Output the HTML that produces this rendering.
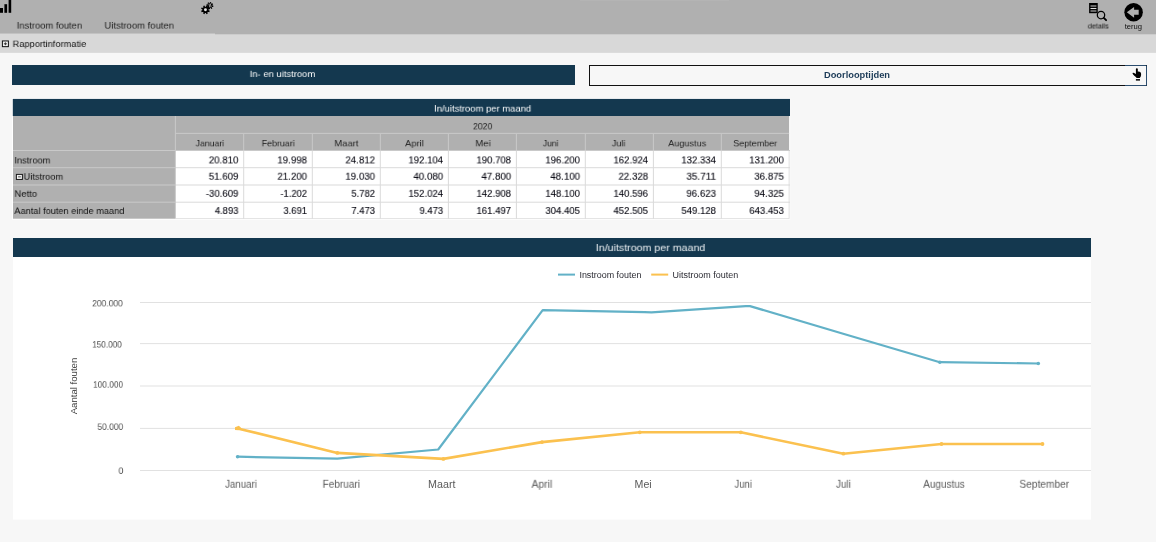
<!DOCTYPE html>
<html><head><meta charset="utf-8"><title>In- en uitstroom</title>
<style>
html,body{margin:0;padding:0;}
body{width:1156px;height:542px;overflow:hidden;position:relative;background:#f7f7f7;font-family:"Liberation Sans",sans-serif;}
body>div,body>svg{position:absolute;}
.t{white-space:nowrap;transform-origin:0 0;will-change:transform;}
</style></head><body>
<svg style="left:0;top:0" width="1156" height="542" viewBox="0 0 1156 542">
<rect x="0" y="33" width="1156" height="19.85" fill="#d8d8d8"/>
<rect x="0" y="0" width="215.1" height="33.55" fill="#b0b0b0"/>
<rect x="215" y="0" width="941" height="34.3" fill="#b0b0b0"/>
<rect x="580" y="0" width="149" height="0.9" fill="#b5b5b5"/>
<rect x="0" y="8" width="3" height="4.8" fill="#000"/>
<rect x="4.4" y="4.2" width="2.7" height="8.6" fill="#000"/>
<rect x="8.6" y="0" width="2.6" height="12.8" fill="#000"/>
<rect x="12" y="65" width="563" height="20" fill="#14384f"/>
<rect x="12" y="98" width="778.2" height="121.7" fill="#fff"/>
<rect x="12.8" y="98.9" width="777.2" height="17.1" fill="#14384f"/>
<rect x="13" y="116" width="776.1" height="34.5" fill="#b0b0b0"/>
<rect x="13" y="150.5" width="162.4" height="68.2" fill="#b0b0b0"/>
<rect x="175.4" y="150.5" width="613.8" height="68.2" fill="#fff"/>
<rect x="174.9" y="116" width="1" height="34.5" fill="#c9c9c9"/>
<rect x="175.4" y="132.9" width="613.7" height="1" fill="#c9c9c9"/>
<rect x="243.2" y="133.9" width="1" height="16.6" fill="#c9c9c9"/>
<rect x="311.8" y="133.9" width="1" height="16.6" fill="#c9c9c9"/>
<rect x="379.8" y="133.9" width="1" height="16.6" fill="#c9c9c9"/>
<rect x="447.9" y="133.9" width="1" height="16.6" fill="#c9c9c9"/>
<rect x="515.9" y="133.9" width="1" height="16.6" fill="#c9c9c9"/>
<rect x="584.8" y="133.9" width="1" height="16.6" fill="#c9c9c9"/>
<rect x="652.9" y="133.9" width="1" height="16.6" fill="#c9c9c9"/>
<rect x="720.8" y="133.9" width="1" height="16.6" fill="#c9c9c9"/>
<rect x="13" y="150" width="777" height="1" fill="#c9c9c9"/>
<rect x="13" y="167.2" width="162.4" height="1" fill="#c9c9c9"/>
<rect x="175.4" y="167.2" width="614.6" height="1" fill="#dadada"/>
<rect x="13" y="184.5" width="162.4" height="1" fill="#c9c9c9"/>
<rect x="175.4" y="184.5" width="614.6" height="1" fill="#dadada"/>
<rect x="13" y="201.7" width="162.4" height="1" fill="#c9c9c9"/>
<rect x="175.4" y="201.7" width="614.6" height="1" fill="#dadada"/>
<rect x="174.9" y="150.5" width="1" height="68.2" fill="#c9c9c9"/>
<rect x="243.2" y="150.5" width="1" height="68.2" fill="#dadada"/>
<rect x="311.8" y="150.5" width="1" height="68.2" fill="#dadada"/>
<rect x="379.8" y="150.5" width="1" height="68.2" fill="#dadada"/>
<rect x="447.9" y="150.5" width="1" height="68.2" fill="#dadada"/>
<rect x="515.9" y="150.5" width="1" height="68.2" fill="#dadada"/>
<rect x="584.8" y="150.5" width="1" height="68.2" fill="#dadada"/>
<rect x="652.9" y="150.5" width="1" height="68.2" fill="#dadada"/>
<rect x="720.8" y="150.5" width="1" height="68.2" fill="#dadada"/>
<rect x="788.7" y="150.5" width="0.8" height="68.2" fill="#d8d8d8"/>
<rect x="175.4" y="218.1" width="613.8" height="0.7" fill="#d8d8d8"/>
<rect x="13" y="238" width="1078" height="19" fill="#14384f"/>
<rect x="13" y="257" width="1078" height="262.6" fill="#fff"/>
<rect x="558" y="273.6" width="17" height="2" fill="#62b1c7"/>
<rect x="651.2" y="273.6" width="17" height="2" fill="#fbc14f"/>
<rect x="140" y="302.0" width="951" height="1" fill="#e1e1e1"/>
<rect x="140" y="343.1" width="951" height="1" fill="#e1e1e1"/>
<rect x="140" y="385.5" width="951" height="1" fill="#e1e1e1"/>
<rect x="140" y="427.9" width="951" height="1" fill="#e1e1e1"/>
<rect x="140" y="470.0" width="951" height="1" fill="#e1e1e1"/>
</svg>
<div class="t" style="left:16px;top:22px;font-size:10px;line-height:10px;color:#222;transform:translate(0.70px,0.00px) scale(0.9412,0.8250);">Instroom fouten</div>
<div class="t" style="left:104px;top:22px;font-size:10px;line-height:10px;color:#222;transform:translate(0.40px,0.00px) scale(0.9486,0.8250);">Uitstroom fouten</div>
<svg style="left:1px;top:40px" width="9" height="9" viewBox="0 0 9 9"><rect x="1.4" y="0.95" width="6" height="5.7" fill="#f2f2f2" stroke="#111" stroke-width="1"/><path d="M2.9 3.8h3M4.4 2.4v2.8" stroke="#333" stroke-width="1"/></svg>
<div class="t" style="left:12px;top:40px;font-size:10px;line-height:10px;color:#111;transform:translate(0.60px,0.60px) scale(0.9272,0.7875);">Rapportinformatie</div>
<svg id="gear" style="left:200px;top:1px" width="15" height="15" viewBox="0 0 15 15"><circle cx="9.9" cy="4.6" r="2.5" fill="#000"/><path d="M9.90 4.60L13.33 5.30M9.90 4.60L11.83 7.52M9.90 4.60L9.20 8.03M9.90 4.60L6.98 6.53M9.90 4.60L6.47 3.90M9.90 4.60L7.97 1.68M9.90 4.60L10.60 1.17M9.90 4.60L12.82 2.67" stroke="#000" stroke-width="1.3"/><path d="M8.900 2.700l1 3.800M10.200 2.400l1 3.800" stroke="#fff" stroke-width="0.600" fill="none"/><circle cx="5.45" cy="8.8" r="3.1" fill="#000"/><path d="M5.45 8.80L9.52 10.47M5.45 8.80L7.14 12.86M5.45 8.80L3.78 12.87M5.45 8.80L1.39 10.49M5.45 8.80L1.38 7.13M5.45 8.80L3.76 4.74M5.45 8.80L7.12 4.73M5.45 8.80L9.51 7.11" stroke="#000" stroke-width="1.5"/><circle cx="5.45" cy="8.8" r="1.45" fill="#e4e4e4"/></svg>
<svg id="det" style="left:1088px;top:2px" width="22" height="20" viewBox="0 0 22 20"><rect x="1.1" y="1.0" width="8.65" height="10.2" fill="#000"/><path d="M2.500 4.000h5.900M2.500 9.000h5.900" stroke="#8a8a8a" stroke-width="1.300"/><path d="M2.500 6.500h5.900" stroke="#e0e0e0" stroke-width="1.100"/><circle cx="13" cy="13.05" r="3.700" fill="#b0b0b0" stroke="#000" stroke-width="1.250"/><path d="M15.800 15.900l2.300 2.300" stroke="#000" stroke-width="1.900" stroke-linecap="round"/></svg>
<div class="t" style="left:1087px;top:22px;font-size:7.5px;line-height:7.5px;color:#111;transform:translate(0.80px,0.50px) scaleX(0.9637);">details</div>
<svg id="ter" style="left:1123px;top:2px" width="21" height="21" viewBox="0 0 21 21"><circle cx="10.600" cy="10.200" r="9.250" fill="#000"/><path d="M3.800 10.200l7.300-5.300v2.800h4.600v5.100h-4.600v2.900z" fill="#b0b0b0"/></svg>
<div class="t" style="left:1124px;top:23px;font-size:7.5px;line-height:7.5px;color:#111;transform:translate(0.70px,0.40px) scaleX(1.0170);">terug</div>
<div class="t" style="left:249px;top:70px;font-size:10px;line-height:10px;color:#fff;transform:translate(0.70px,0.70px) scale(0.9427,0.7875);">In- en uitstroom</div>
<div style="left:589px;top:65px;width:556px;height:19px;border:1px solid #111;background:#f7f7f7;"></div>
<div style="left:1125px;top:65px;width:21px;height:19px;border:1px solid #2c4d6e;border-left:none;border-radius:0 1.500px 1.500px 0;"></div>
<div class="t" style="left:824px;top:70px;font-size:9px;line-height:9px;color:#1b3a57;font-weight:bold;transform:translate(0.00px,0.80px) scaleX(1.0312);">Doorlooptijden</div>
<svg id="hand" style="left:1131px;top:67px" width="12" height="15" viewBox="0 0 12 15"><path d="M1.400 6.100Q2.200 5.400 3.100 6.100L4.900 7V2.100Q4.900 1.200 5.850 1.200Q6.800 1.200 6.800 2.100V4.600Q8.600 4.400 9.500 5.300Q10.300 6.200 10.100 8Q9.900 9.800 8.700 11H5.700Q4.600 9.800 3.300 8.700Q1.900 7.600 1.400 6.100z" fill="#000"/><rect x="4.900" y="12.100" width="4.100" height="1.500" fill="#000"/></svg>
<div class="t" style="left:434px;top:105px;font-size:10px;line-height:10px;color:#fff;transform:translate(0.10px,0.10px) scale(0.9433,0.8125);">In/uitstroom per maand</div>
<div class="t" style="left:473px;top:123px;font-size:10px;line-height:10px;color:#222;transform:translate(0.00px,0.00px) scale(0.8674,0.8000);">2020</div>
<div class="t" style="left:195px;top:140px;font-size:10px;line-height:10px;color:#222;transform:translate(0.65px,0.10px) scale(0.8686,0.7812);">Januari</div>
<div class="t" style="left:261px;top:140px;font-size:10px;line-height:10px;color:#222;transform:translate(0.70px,0.10px) scale(0.8859,0.7812);">Februari</div>
<div class="t" style="left:334px;top:140px;font-size:10px;line-height:10px;color:#222;transform:translate(0.35px,0.10px) scale(0.9428,0.7812);">Maart</div>
<div class="t" style="left:405px;top:140px;font-size:10px;line-height:10px;color:#222;transform:translate(0.00px,0.10px) scale(0.9393,0.7812);">April</div>
<div class="t" style="left:475px;top:140px;font-size:10px;line-height:10px;color:#222;transform:translate(0.35px,0.10px) scale(0.9488,0.7812);">Mei</div>
<div class="t" style="left:542px;top:140px;font-size:10px;line-height:10px;color:#222;transform:translate(0.90px,0.10px) scale(0.8497,0.7812);">Juni</div>
<div class="t" style="left:611px;top:140px;font-size:10px;line-height:10px;color:#222;transform:translate(0.85px,0.10px) scale(0.8991,0.7812);">Juli</div>
<div class="t" style="left:668px;top:140px;font-size:10px;line-height:10px;color:#222;transform:translate(0.20px,0.10px) scale(0.9112,0.7812);">Augustus</div>
<div class="t" style="left:733px;top:140px;font-size:10px;line-height:10px;color:#222;transform:translate(0.20px,0.10px) scale(0.8994,0.7812);">September</div>
<div class="t" style="left:14px;top:156px;font-size:10px;line-height:10px;color:#111;transform:translate(0.40px,0.90px) scale(0.9253,0.8125);">Instroom</div>
<div class="t" style="left:208px;top:156px;font-size:10px;line-height:10px;color:#05050f;transform:translate(0.80px,0.40px) scale(0.9675,0.8750);-webkit-text-stroke:0.1px #05050f;">20.810</div>
<div class="t" style="left:277px;top:156px;font-size:10px;line-height:10px;color:#05050f;transform:translate(0.40px,0.40px) scale(0.9675,0.8750);-webkit-text-stroke:0.1px #05050f;">19.998</div>
<div class="t" style="left:345px;top:156px;font-size:10px;line-height:10px;color:#05050f;transform:translate(0.40px,0.40px) scale(0.9675,0.8750);-webkit-text-stroke:0.1px #05050f;">24.812</div>
<div class="t" style="left:408px;top:156px;font-size:10px;line-height:10px;color:#05050f;transform:translate(0.50px,0.40px) scale(0.9570,0.8750);-webkit-text-stroke:0.1px #05050f;">192.104</div>
<div class="t" style="left:476px;top:156px;font-size:10px;line-height:10px;color:#05050f;transform:translate(0.50px,0.40px) scale(0.9570,0.8750);-webkit-text-stroke:0.1px #05050f;">190.708</div>
<div class="t" style="left:545px;top:156px;font-size:10px;line-height:10px;color:#05050f;transform:translate(0.40px,0.40px) scale(0.9570,0.8750);-webkit-text-stroke:0.1px #05050f;">196.200</div>
<div class="t" style="left:613px;top:156px;font-size:10px;line-height:10px;color:#05050f;transform:translate(0.50px,0.40px) scale(0.9570,0.8750);-webkit-text-stroke:0.1px #05050f;">162.924</div>
<div class="t" style="left:681px;top:156px;font-size:10px;line-height:10px;color:#05050f;transform:translate(0.40px,0.40px) scale(0.9570,0.8750);-webkit-text-stroke:0.1px #05050f;">132.334</div>
<div class="t" style="left:749px;top:156px;font-size:10px;line-height:10px;color:#05050f;transform:translate(0.30px,0.40px) scale(0.9570,0.8750);-webkit-text-stroke:0.1px #05050f;">131.200</div>
<div class="t" style="left:23px;top:173px;font-size:10px;line-height:10px;color:#111;transform:translate(0.60px,0.20px) scale(0.9230,0.8125);">Uitstroom</div>
<div class="t" style="left:208px;top:172px;font-size:10px;line-height:10px;color:#05050f;transform:translate(0.80px,0.70px) scale(0.9675,0.8750);-webkit-text-stroke:0.1px #05050f;">51.609</div>
<div class="t" style="left:277px;top:172px;font-size:10px;line-height:10px;color:#05050f;transform:translate(0.40px,0.70px) scale(0.9675,0.8750);-webkit-text-stroke:0.1px #05050f;">21.200</div>
<div class="t" style="left:345px;top:172px;font-size:10px;line-height:10px;color:#05050f;transform:translate(0.40px,0.70px) scale(0.9675,0.8750);-webkit-text-stroke:0.1px #05050f;">19.030</div>
<div class="t" style="left:413px;top:172px;font-size:10px;line-height:10px;color:#05050f;transform:translate(0.50px,0.70px) scale(0.9675,0.8750);-webkit-text-stroke:0.1px #05050f;">40.080</div>
<div class="t" style="left:481px;top:172px;font-size:10px;line-height:10px;color:#05050f;transform:translate(0.50px,0.70px) scale(0.9675,0.8750);-webkit-text-stroke:0.1px #05050f;">47.800</div>
<div class="t" style="left:550px;top:172px;font-size:10px;line-height:10px;color:#05050f;transform:translate(0.40px,0.70px) scale(0.9675,0.8750);-webkit-text-stroke:0.1px #05050f;">48.100</div>
<div class="t" style="left:618px;top:172px;font-size:10px;line-height:10px;color:#05050f;transform:translate(0.50px,0.70px) scale(0.9675,0.8750);-webkit-text-stroke:0.1px #05050f;">22.328</div>
<div class="t" style="left:686px;top:172px;font-size:10px;line-height:10px;color:#05050f;transform:translate(0.40px,0.70px) scale(0.9918,0.8750);-webkit-text-stroke:0.1px #05050f;">35.711</div>
<div class="t" style="left:754px;top:172px;font-size:10px;line-height:10px;color:#05050f;transform:translate(0.30px,0.70px) scale(0.9675,0.8750);-webkit-text-stroke:0.1px #05050f;">36.875</div>
<div class="t" style="left:14px;top:190px;font-size:10px;line-height:10px;color:#111;transform:translate(0.40px,0.30px) scale(0.9537,0.8125);">Netto</div>
<div class="t" style="left:205px;top:189px;font-size:10px;line-height:10px;color:#05050f;transform:translate(0.80px,0.80px) scale(0.9610,0.8750);-webkit-text-stroke:0.1px #05050f;">-30.609</div>
<div class="t" style="left:280px;top:189px;font-size:10px;line-height:10px;color:#05050f;transform:translate(0.40px,0.80px) scale(0.9380,0.8750);-webkit-text-stroke:0.1px #05050f;">-1.202</div>
<div class="t" style="left:351px;top:189px;font-size:10px;line-height:10px;color:#05050f;transform:translate(0.40px,0.80px) scale(0.9428,0.8750);-webkit-text-stroke:0.1px #05050f;">5.782</div>
<div class="t" style="left:408px;top:189px;font-size:10px;line-height:10px;color:#05050f;transform:translate(0.50px,0.80px) scale(0.9570,0.8750);-webkit-text-stroke:0.1px #05050f;">152.024</div>
<div class="t" style="left:476px;top:189px;font-size:10px;line-height:10px;color:#05050f;transform:translate(0.50px,0.80px) scale(0.9570,0.8750);-webkit-text-stroke:0.1px #05050f;">142.908</div>
<div class="t" style="left:545px;top:189px;font-size:10px;line-height:10px;color:#05050f;transform:translate(0.40px,0.80px) scale(0.9570,0.8750);-webkit-text-stroke:0.1px #05050f;">148.100</div>
<div class="t" style="left:613px;top:189px;font-size:10px;line-height:10px;color:#05050f;transform:translate(0.50px,0.80px) scale(0.9570,0.8750);-webkit-text-stroke:0.1px #05050f;">140.596</div>
<div class="t" style="left:686px;top:189px;font-size:10px;line-height:10px;color:#05050f;transform:translate(0.40px,0.80px) scale(0.9675,0.8750);-webkit-text-stroke:0.1px #05050f;">96.623</div>
<div class="t" style="left:754px;top:189px;font-size:10px;line-height:10px;color:#05050f;transform:translate(0.30px,0.80px) scale(0.9675,0.8750);-webkit-text-stroke:0.1px #05050f;">94.325</div>
<div class="t" style="left:14px;top:207px;font-size:10px;line-height:10px;color:#111;transform:translate(0.40px,0.50px) scale(0.9201,0.8125);">Aantal fouten einde maand</div>
<div class="t" style="left:214px;top:207px;font-size:10px;line-height:10px;color:#05050f;transform:translate(0.80px,0.00px) scale(0.9428,0.8750);-webkit-text-stroke:0.1px #05050f;">4.893</div>
<div class="t" style="left:283px;top:207px;font-size:10px;line-height:10px;color:#05050f;transform:translate(0.40px,0.00px) scale(0.9428,0.8750);-webkit-text-stroke:0.1px #05050f;">3.691</div>
<div class="t" style="left:351px;top:207px;font-size:10px;line-height:10px;color:#05050f;transform:translate(0.40px,0.00px) scale(0.9428,0.8750);-webkit-text-stroke:0.1px #05050f;">7.473</div>
<div class="t" style="left:419px;top:207px;font-size:10px;line-height:10px;color:#05050f;transform:translate(0.50px,0.00px) scale(0.9428,0.8750);-webkit-text-stroke:0.1px #05050f;">9.473</div>
<div class="t" style="left:476px;top:207px;font-size:10px;line-height:10px;color:#05050f;transform:translate(0.50px,0.00px) scale(0.9570,0.8750);-webkit-text-stroke:0.1px #05050f;">161.497</div>
<div class="t" style="left:545px;top:207px;font-size:10px;line-height:10px;color:#05050f;transform:translate(0.40px,0.00px) scale(0.9570,0.8750);-webkit-text-stroke:0.1px #05050f;">304.405</div>
<div class="t" style="left:613px;top:207px;font-size:10px;line-height:10px;color:#05050f;transform:translate(0.50px,0.00px) scale(0.9570,0.8750);-webkit-text-stroke:0.1px #05050f;">452.505</div>
<div class="t" style="left:681px;top:207px;font-size:10px;line-height:10px;color:#05050f;transform:translate(0.40px,0.00px) scale(0.9570,0.8750);-webkit-text-stroke:0.1px #05050f;">549.128</div>
<div class="t" style="left:749px;top:207px;font-size:10px;line-height:10px;color:#05050f;transform:translate(0.30px,0.00px) scale(0.9570,0.8750);-webkit-text-stroke:0.1px #05050f;">643.453</div>
<svg style="left:15px;top:173px" width="9" height="9" viewBox="0 0 9 9"><rect x="1.400" y="1.400" width="6" height="5.050" fill="#f2f2f2" stroke="#1a1a1a" stroke-width="1"/><path d="M3.100 3.850h2.700" stroke="#333" stroke-width="0.900"/></svg>
<div class="t" style="left:595px;top:243px;font-size:10px;line-height:10px;color:#eef2f5;transform:translate(0.70px,0.90px) scale(1.0649,0.9000);">In/uitstroom per maand</div>
<div class="t" style="left:579px;top:270px;font-size:8.5px;line-height:8.5px;color:#2b2b33;transform:translate(0.40px,0.60px) scaleX(1.0497);">Instroom fouten</div>
<div class="t" style="left:672px;top:270px;font-size:8.5px;line-height:8.5px;color:#2b2b33;transform:translate(0.50px,0.60px) scaleX(1.0533);">Uitstroom fouten</div>
<div class="t" style="left:92px;top:300px;font-size:10px;line-height:10px;color:#4a4a4a;transform:translate(0.20px,0.00px) scale(0.8463,0.8000);">200.000</div>
<div class="t" style="left:92px;top:341px;font-size:10px;line-height:10px;color:#4a4a4a;transform:translate(0.20px,0.10px) scale(0.8187,0.8000);">150.000</div>
<div class="t" style="left:93px;top:381px;font-size:10px;line-height:10px;color:#4a4a4a;transform:translate(0.00px,0.20px) scale(0.8353,0.8000);">100.000</div>
<div class="t" style="left:97px;top:423px;font-size:10px;line-height:10px;color:#4a4a4a;transform:translate(0.40px,0.50px) scale(0.8433,0.8000);">50.000</div>
<div class="t" style="left:118px;top:467px;font-size:10px;line-height:10px;color:#4a4a4a;transform:translate(0.50px,0.50px) scale(0.8809,0.8000);">0</div>
<div class="t" style="left:23.5px;top:381px;width:100px;text-align:center;font-size:9.6px;line-height:10px;color:#3a3a3a;transform-origin:50% 50%;transform:rotate(-90deg);">Aantal fouten</div>
<div class="t" style="left:225px;top:478px;font-size:10.5px;line-height:10.5px;color:#5a5a5a;transform:translate(0.05px,0.80px) scaleX(0.9259);">Januari</div>
<div class="t" style="left:322px;top:478px;font-size:10.5px;line-height:10.5px;color:#5a5a5a;transform:translate(0.60px,0.80px) scaleX(0.9563);">Februari</div>
<div class="t" style="left:428px;top:478px;font-size:10.5px;line-height:10.5px;color:#5a5a5a;transform:translate(0.10px,0.80px) scaleX(1.0207);">Maart</div>
<div class="t" style="left:531px;top:478px;font-size:10.5px;line-height:10.5px;color:#5a5a5a;transform:translate(0.55px,0.80px) scaleX(0.9850);">April</div>
<div class="t" style="left:634px;top:478px;font-size:10.5px;line-height:10.5px;color:#5a5a5a;transform:translate(0.55px,0.80px) scaleX(1.0105);">Mei</div>
<div class="t" style="left:734px;top:478px;font-size:10.5px;line-height:10.5px;color:#5a5a5a;transform:translate(0.55px,0.80px) scaleX(0.8980);">Juni</div>
<div class="t" style="left:835px;top:478px;font-size:10.5px;line-height:10.5px;color:#5a5a5a;transform:translate(0.95px,0.80px) scaleX(0.9451);">Juli</div>
<div class="t" style="left:923px;top:478px;font-size:10.5px;line-height:10.5px;color:#5a5a5a;transform:translate(0.25px,0.80px) scaleX(0.9479);">Augustus</div>
<div class="t" style="left:1019px;top:478px;font-size:10.5px;line-height:10.5px;color:#5a5a5a;transform:translate(0.40px,0.80px) scaleX(0.9693);">September</div>
<svg style="left:0;top:0" width="1156" height="542" viewBox="0 0 1156 542"><polyline points="237.6,456.7 337.3,458.7 438.2,449.5 542.7,310.2 644.5,312.2 651.5,312.3 745.8,306.2 750,306.1 844,334 939.8,362.2 1038.3,363.5" fill="none" stroke="#62b1c7" stroke-width="2.2" stroke-linejoin="round" stroke-linecap="round"/><polyline points="237.6,428.4 337.3,452.9 443.4,458.9 542,442.1 639.8,432.3 740.8,432.3 843.4,453.7 941.5,444.0 1042.5,444.0" fill="none" stroke="#fbc14f" stroke-width="2.6" stroke-linejoin="round" stroke-linecap="round"/><circle cx="237.6" cy="456.7" r="1.8" fill="#62b1c7"/><circle cx="939.8" cy="362.2" r="1.8" fill="#62b1c7"/><circle cx="1038.3" cy="363.5" r="1.8" fill="#62b1c7"/><circle cx="337.3" cy="452.9" r="1.9" fill="#fbc14f"/><circle cx="443.4" cy="458.9" r="1.9" fill="#fbc14f"/><circle cx="542" cy="442.1" r="1.9" fill="#fbc14f"/><circle cx="639.8" cy="432.3" r="1.9" fill="#fbc14f"/><circle cx="740.8" cy="432.3" r="1.9" fill="#fbc14f"/><circle cx="843.4" cy="453.7" r="1.9" fill="#fbc14f"/><circle cx="941.5" cy="444.0" r="1.9" fill="#fbc14f"/><circle cx="1042.5" cy="444.0" r="1.9" fill="#fbc14f"/><polygon points="235,427.2 238.9,425.8 241.2,427.9 238.6,430.3 235,429.9" fill="#fbc14f"/></svg>
</body></html>
